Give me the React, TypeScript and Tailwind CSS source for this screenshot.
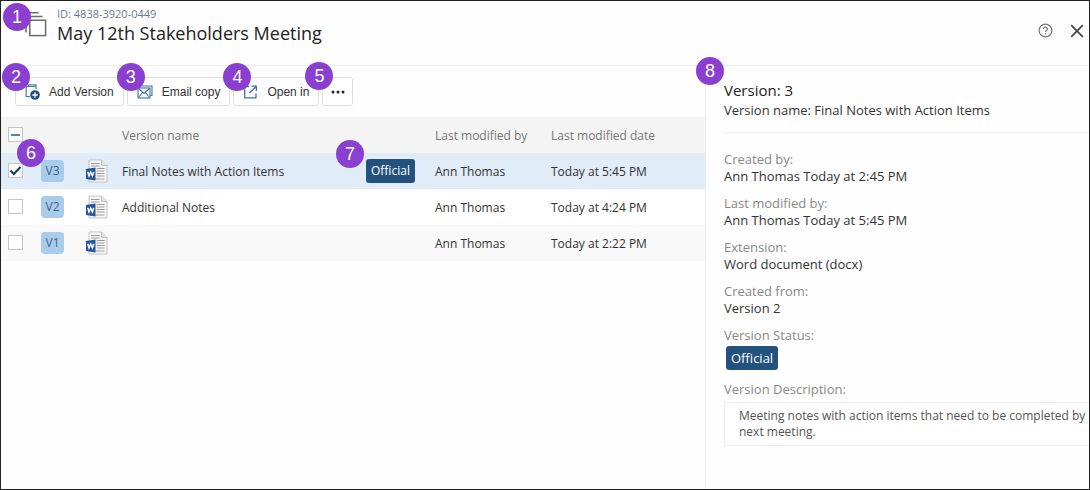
import { useState } from "react";
import type { ReactNode } from "react";

type Version = { id: string; name: string; official: boolean; by: string; date: string };

const versions: Version[] = [
  { id: "V3", name: "Final Notes with Action Items", official: true, by: "Ann Thomas", date: "Today at 5:45 PM" },
  { id: "V2", name: "Additional Notes", official: false, by: "Ann Thomas", date: "Today at 4:24 PM" },
  { id: "V1", name: "", official: false, by: "Ann Thomas", date: "Today at 2:22 PM" },
];

const details = [
  { label: "Created by:", value: "Ann Thomas Today at 2:45 PM" },
  { label: "Last modified by:", value: "Ann Thomas Today at 5:45 PM" },
  { label: "Extension:", value: "Word document (docx)" },
  { label: "Created from:", value: "Version 2" },
];

function Marker({ n, place }: { n: number; place: string }) {
  return (
    <span
      className={`pointer-events-none absolute z-10 flex size-7 items-center justify-center rounded-full bg-[#8a3fd1] font-['Liberation_Sans',sans-serif] text-lg leading-none text-white ${place}`}
    >
      {n}
    </span>
  );
}

function StackIcon() {
  return (
    <svg width="24" height="28" viewBox="0 0 24 28" fill="none" stroke="#6b6b6b" strokeWidth="1.5" aria-hidden="true">
      <rect x="6.8" y="10.2" width="15.8" height="15.4" />
      <path d="M3 22.500V6.500h16.500M1 18V2.800h14.500" />
    </svg>
  );
}

function AddVersionIcon() {
  return (
    <svg width="15" height="16" viewBox="0 0 15 16" fill="none" aria-hidden="true">
      <path d="M5 12.700H1.200V2.500H11V5M3.500 2.500V.8H11v1.700" stroke="#4b7ba8" strokeWidth="1.2" />
      <circle cx="10" cy="11" r="4.800" fill="#1d4f80" />
      <path d="M10 8.300v5.400M7.300 11h5.400" stroke="#fff" strokeWidth="1.3" />
    </svg>
  );
}

function EmailIcon() {
  return (
    <svg width="16" height="14" viewBox="0 0 16 14" fill="none" stroke="#3f73a3" strokeWidth="1.100" aria-hidden="true">
      <path d="M3 3V1h12v9.500h-1.500" />
      <rect x="1" y="3" width="12" height="10" />
      <path d="M1.500 3.500 7 8.500l5.500-5M1.500 12.500l4-5M12.500 12.500l-4-5" />
    </svg>
  );
}

function OpenIcon() {
  return (
    <svg width="15" height="14" viewBox="0 0 15 14" fill="none" stroke="#3f73a3" strokeWidth="1.3" aria-hidden="true">
      <path d="M6 1.500H1.700v11.300H13V8.500M8.500 1.200h4.800V6M13.300 1.200 6.500 8" />
    </svg>
  );
}

function WordIcon() {
  return (
    <svg width="22" height="24" viewBox="0 0 22 24" className="block" aria-hidden="true">
      <path d="M3 1h12.500L21 6.500V23H3z" fill="#f7f7f7" stroke="#c3c3c3" />
      <path d="M15.500 1v5.500H21" fill="#e2e2e2" stroke="#c3c3c3" />
      <path d="M5 4.500h8.500M5 7h8.500M10.500 9.500h8M10.500 12h8M10.500 14.500h8M10.500 17h8M5 20h13.500" stroke="#9b9b9b" strokeWidth="1.200" />
      <path d="M0 10 9.500 8.500v13L0 20z" fill="#2456a0" />
      <path d="m1.700 12.800 1.300 4.200 1.700-3.800 1.700 3.800 1.300-4.200" fill="none" stroke="#fff" strokeWidth="1.500" />
    </svg>
  );
}

function ToolButton({ icon, label, n, place }: { icon: ReactNode; label: string; n: number; place: string }) {
  return (
    <div className="relative">
      <button
        type="button"
        className="flex h-[29px] items-center gap-[9px] rounded-[3px] border border-[#dedede] bg-white px-[9px] font-['Liberation_Sans',sans-serif] text-xs text-[#333]"
      >
        {icon}
        <span className="whitespace-nowrap">{label}</span>
      </button>
      <Marker n={n} place={place} />
    </div>
  );
}

function OfficialBadge() {
  return (
    <span className="inline-flex h-6 items-center rounded-[3px] bg-[#23527f] px-[5px] font-medium text-white">
      Official
    </span>
  );
}

const checkbox =
  "relative block size-[15px] cursor-pointer appearance-none border border-[#c4c4c4] bg-white";

export default function App() {
  const [selected, setSelected] = useState<string[]>(["V3"]);
  const toggle = (id: string) =>
    setSelected((s) => (s.includes(id) ? s.filter((x) => x !== id) : [...s, id]));
  const all = selected.length === versions.length;

  return (
    <div className="flex min-h-screen flex-col border border-[#222] bg-[#fefefe] font-['Open_Sans','Noto_Sans',sans-serif] text-xs text-[#333]">
      <header className="flex h-[65px] items-start border-b border-[#ededed] pr-[5px]">
        <div className="relative pt-[9px] pl-[22px]">
          <StackIcon />
          <Marker n={1} place="top-[2px] left-[2px]" />
        </div>
        <div className="grow pt-[5px] pl-[10px]">
          <p className="text-[11px] leading-[15px] text-[#6b7a90]">ID: 4838-3920-0449</p>
          <h1 className="text-lg leading-6 text-[#222]">May 12th Stakeholders Meeting</h1>
        </div>
        <div className="flex items-center gap-[17px] pt-[22px]">
          <button type="button" aria-label="Help">
            <svg width="15" height="15" viewBox="0 0 15 15" fill="none" stroke="#777" aria-hidden="true">
              <circle cx="7.500" cy="7.500" r="6.400" strokeWidth="1.200" />
              <path d="M5.600 6a1.900 1.900 0 1 1 2.900 1.600c-.7.400-1 .7-1 1.400M7.500 10v1.200" strokeWidth="1.200" />
            </svg>
          </button>
          <button type="button" aria-label="Close">
            <svg width="14" height="14" viewBox="0 0 14 14" stroke="#444" strokeWidth="1.700" aria-hidden="true">
              <path d="m1.200 1.200 11.600 11.600M12.800 1.200 1.200 12.800" />
            </svg>
          </button>
        </div>
      </header>

      <div className="flex grow">
        <main className="min-w-0 grow">
          <div className="flex gap-[3px] pt-[11px] pb-[11px] pl-[14px]">
            <ToolButton icon={<AddVersionIcon />} label="Add Version" n={2} place="-top-[14px] -left-[13px]" />
            <ToolButton icon={<EmailIcon />} label="Email copy" n={3} place="-top-[14px] -left-[10px]" />
            <ToolButton icon={<OpenIcon />} label="Open in" n={4} place="-top-[14px] -left-[10px]" />
            <div className="relative">
              <button
                type="button"
                aria-label="More actions"
                className="flex h-[29px] w-[31px] items-center justify-center rounded-[3px] border border-[#dedede] bg-white"
              >
                <svg width="14" height="4" viewBox="0 0 14 4" fill="#222" aria-hidden="true">
                  <circle cx="2" cy="2" r="1.500" />
                  <circle cx="7" cy="2" r="1.500" />
                  <circle cx="12" cy="2" r="1.500" />
                </svg>
              </button>
              <Marker n={5} place="-top-[15px] -left-[17px]" />
            </div>
          </div>

          <table className="w-full table-fixed border-collapse text-left">
            <colgroup>
              <col className="w-[34px]" />
              <col className="w-[46px]" />
              <col className="w-[41px]" />
              <col />
              <col className="w-[69px]" />
              <col className="w-[116px]" />
              <col className="w-[154px]" />
            </colgroup>
            <thead>
              <tr className="h-9 bg-[#f4f4f4] text-[#777]">
                <th className="pb-[2px] pl-[7px]">
                  <span className="relative block">
                    <input
                      type="checkbox"
                      aria-label="Select all versions"
                      checked={all}
                      onChange={() => setSelected(all ? [] : versions.map((v) => v.id))}
                      className={checkbox}
                    />
                    <span className="pointer-events-none absolute top-[7px] left-[3px] h-[2px] w-[9px] bg-[#66829c]" />
                  </span>
                </th>
                <th />
                <th />
                <th className="pt-[2px] font-normal" colSpan={2}>Version name</th>
                <th className="pt-[2px] font-normal">Last modified by</th>
                <th className="pt-[2px] font-normal">Last modified date</th>
              </tr>
            </thead>
            <tbody>
              {versions.map((v, i) => {
                const on = selected.includes(v.id);
                return (
                  <tr key={v.id} className={`h-9 ${on ? "bg-[#e0ecf8]" : i % 2 ? "bg-white" : "bg-[#f9f9f9]"}`}>
                    <td className="pb-[2px] pl-[7px]">
                      <span className="relative block">
                        <input
                          type="checkbox"
                          aria-label={`Select ${v.id}`}
                          checked={on}
                          onChange={() => toggle(v.id)}
                          className={checkbox}
                        />
                        {on && (
                          <svg width="15" height="15" viewBox="0 0 15 15" className="pointer-events-none absolute top-0 left-0" aria-hidden="true">
                            <path d="m2.500 7.500 3.300 3.500 6.700-7" fill="none" stroke="#123a5c" strokeWidth="2" />
                          </svg>
                        )}
                        {i === 0 && <Marker n={6} place="-top-[24px] left-[9px]" />}
                      </span>
                    </td>
                    <td>
                      <span className="ml-[6px] flex h-[22px] w-[23px] items-center justify-center rounded-[4px] bg-[#abcbea] text-[#3a678f]">
                        {v.id}
                      </span>
                    </td>
                    <td>
                      <span className="block pl-[5px]"><WordIcon /></span>
                    </td>
                    <td className="pt-[2px] whitespace-nowrap">{v.name}</td>
                    <td>
                      {v.official && (
                        <span className="relative flex w-fit">
                          <OfficialBadge />
                          <Marker n={7} place="-top-[19px] -left-[30px]" />
                        </span>
                      )}
                    </td>
                    <td className="pt-[2px] whitespace-nowrap">{v.by}</td>
                    <td className="pt-[2px] whitespace-nowrap">{v.date}</td>
                  </tr>
                );
              })}
            </tbody>
          </table>
        </main>

        <aside className="relative w-[384px] shrink-0 border-l border-[#ededed] pl-[18px] text-[13px]">
          <Marker n={8} place="-top-[9px] -left-[10px]" />
          <div className="border-b border-[#ededed] pt-[13px] pb-[13px]">
            <h2 className="text-[15px] leading-[22px] text-[#222]">Version: 3</h2>
            <p className="leading-[18px]">Version name: Final Notes with Action Items</p>
          </div>
          <dl className="flex flex-col gap-[10px] pt-[18px] leading-[17px]">
            {details.map((d) => (
              <div key={d.label}>
                <dt className="text-[#888]">{d.label}</dt>
                <dd>{d.value}</dd>
              </div>
            ))}
            <div>
              <dt className="text-[#888]">Version Status:</dt>
              <dd className="flex pt-[2px] pl-[2px]"><OfficialBadge /></dd>
            </div>
          </dl>
          <label htmlFor="description" className="block pt-[11px] leading-[17px] text-[#888]">
            Version Description:
          </label>
          <textarea
            id="description"
            readOnly
            rows={2}
            defaultValue="Meeting notes with action items that need to be completed by next meeting."
            className="mt-1 block h-[44px] w-full resize-none overflow-hidden border border-r-0 border-[#ededed] bg-white py-[5px] pr-0 pl-[14px] text-xs leading-4 text-[#555] outline-none"
          />
        </aside>
      </div>
    </div>
  );
}
